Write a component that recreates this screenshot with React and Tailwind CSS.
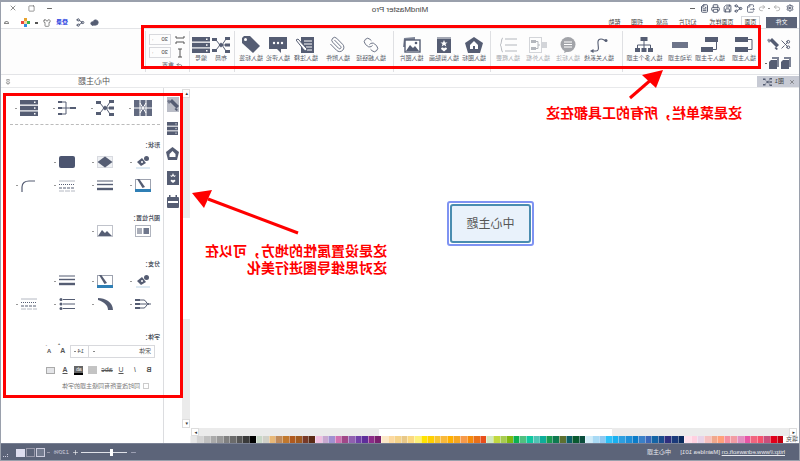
import { Scissors, Printer, Save, Share2, Undo2, Redo2, Link, Paperclip, Shirt, Cloud, Settings, FileOutput, FileText, Minus, Plus, X, Pin, Square, Minus as Dash } from 'lucide-react';

const D = '#555d73';
const G = '#b4b7bd';

const palette = [
  '#c00010', '#e0001b', '#c94f7c', '#f4516c', '#f1657f', '#e756a5', '#e18fc0', '#f29ca3', '#f48fa0', '#ffa07a', '#f0a88c', '#f6c0c0', '#e8d3e8', '#ffd0e0', '#ffe0ec',
  '#0a2a5e', '#1b3a7a', '#2e2e7e', '#1a4b8c', '#1464a5', '#3a66b8', '#3a80c8', '#0b7cc8', '#1f8fd8', '#2d9fe0', '#18b0f0', '#2cc0f8', '#90c8f0', '#a8daf5', '#d0ecf8',
  '#0a4d3c', '#0a5a30', '#0b5e66', '#5d7030', '#0e7a50', '#1a9a50', '#0eae9a', '#50c4b4', '#10c8a0', '#50c080', '#0cb050', '#80b810', '#a8cc50', '#c0d840', '#d0e8c0',
  '#e84e1b', '#e8701a', '#f58a0b', '#f79a4a', '#f5a623', '#ffb000', '#f9b93a', '#f7c52f', '#ffd000', '#ffe400', '#fdf07a', '#fbd880', '#e8c888', '#f5d38a', '#fcd9a0', '#fce8c8',
  '#7a1f6e', '#8c2a88', '#5e2e9a', '#7040a8', '#9060b0', '#a04888', '#d070b0', '#a090d0', '#c8a8d0', '#f0c0e0',
  '#5a2a15', '#783a28', '#a05a20', '#b05a1e', '#c0782e', '#c08a5a', '#e8b878', '#d0d0c8', '#c8d8c8',
  '#000000', '#3a3a3a', '#555555', '#6b6b6b', '#808080', '#999999', '#aaaaaa', '#c0c0c0', '#d4d4d4', '#e8e8e8',
];

// drawn the way the picture shows them, the page flip turns them back
function Ic({ w = 18, h = 16, children }) {
  return (
    <svg width={w} height={h} viewBox={`0 0 ${w} ${h}`} className="-scale-x-100 shrink-0">
      {children}
    </svg>
  );
}

const TopicIcon = () => (
  <Ic w={18} h={15}>
    <rect x="0" y="0" width="13" height="5" fill={D} />
    <rect x="0" y="10" width="13" height="5" fill={D} />
    <path d="M13 2.5H17V12.5H13" fill="none" stroke={D} />
  </Ic>
);
const SubIcon = () => (
  <Ic w={18} h={15}>
    <rect x="4" y="0" width="13" height="5" fill={D} />
    <rect x="0" y="10" width="12" height="5" fill={D} />
    <path d="M15.5 5V12.5H12" fill="none" stroke={D} />
  </Ic>
);
const FloatIcon = () => (
  <Ic w={18} h={15}>
    <rect x="1" y="5" width="16" height="6" fill="#6d7489" />
  </Ic>
);
const MultiIcon = () => (
  <Ic w={18} h={15}>
    <rect x="5.5" y="0" width="7" height="4" fill={D} />
    <path d="M9 4V8M2.5 8H15.5M2.5 8V11M9 8V11M15.5 8V11" fill="none" stroke={D} />
    <rect x="0" y="11" width="5" height="4" fill={D} />
    <rect x="6.5" y="11" width="5" height="4" fill={D} />
    <rect x="13" y="11" width="5" height="4" fill={D} />
  </Ic>
);
const RelationIcon = () => (
  <Ic w={18} h={16}>
    <path d="M2 14H6C12 14 4 2 11 2C13 2 14 3 15.5 3.5" fill="none" stroke={D} strokeWidth="1.1" />
    <path d="M0 14L3.5 12V16Z" fill={D} />
    <circle cx="16" cy="3.5" r="1.5" fill={D} />
  </Ic>
);
const CalloutIcon = () => (
  <Ic w={18} h={16}>
    <circle cx="9" cy="7.5" r="7.5" fill="#a2a4a9" />
    <path d="M6 13L5 16L10 14Z" fill="#a2a4a9" />
    <path d="M5 5H13M5 7.5H13M5 10H13" stroke="#fff" />
  </Ic>
);
const FrameIcon = () => (
  <Ic w={18} h={16}>
    <rect x="0.5" y="0.5" width="12" height="15" fill="none" stroke="#d3d5d9" />
    <rect x="2" y="3" width="5" height="3" fill={G} />
    <rect x="2" y="10" width="5" height="3" fill={G} />
    <path d="M7 4.5H9V11.5H7M9 8H11" fill="none" stroke={G} />
    <rect x="12" y="5" width="6" height="6" fill="#d3d5d9" />
  </Ic>
);
const SummaryIcon = () => (
  <Ic w={18} h={16}>
    <path d="M4 1C2 1 3 7 1 8C3 9 2 15 4 15" fill="none" stroke={G} />
    <path d="M6 2H18M6 8H18M6 14H18" stroke={G} strokeWidth="1.2" />
  </Ic>
);
const PentIcon = () => (
  <Ic w={18} h={16}>
    <path d="M9 0L18 6L15 16H3L0 6Z" fill={D} />
    <path d="M9 4L13 8V12H5V8Z" fill="#fff" />
    <path d="M8 9H10V12H8Z" fill={D} />
  </Ic>
);
const ClipartIcon = () => (
  <Ic w={16} h={16}>
    <rect x="1" y="0" width="14" height="16" fill={D} />
    <rect x="1" y="0" width="14" height="2" fill="#a4a8b4" />
    <path d="M8 3L9 5.5H11.5L9.5 7L10.3 9.5L8 8L5.7 9.5L6.5 7L4.5 5.5H7Z" fill="#fff" />
    <path d="M8 14.5L5 12C5 10 7.5 10 8 11.5C8.5 10 11 10 11 12Z" fill="#fff" />
  </Ic>
);
const PictureIcon = () => (
  <Ic w={20} h={16}>
    <path d="M3 1L14 0V3H4V10H2Z" fill="#7d8496" />
    <rect x="4" y="3" width="15" height="12" fill="#fff" stroke={D} strokeWidth="1.4" />
    <path d="M5 14L9 8L12 11L14 9L18 14Z" fill={D} />
    <circle cx="15" cy="6" r="1.3" fill={D} />
  </Ic>
);
const NoteIcon = () => (
  <Ic w={19} h={16}>
    <rect x="5" y="0" width="13" height="16" fill={D} />
    <path d="M8 4H16M8 7H16M10 10H16M11 13H16" stroke="#fff" />
    <path d="M0 3L2 2L11 12L10 14L8 13Z" fill="#fff" stroke={D} />
  </Ic>
);
const CommentIcon = () => (
  <Ic w={18} h={16}>
    <path d="M0 0H18V12H12V16L8 12H0Z" fill={D} />
    <circle cx="5" cy="6" r="1.2" fill="#fff" />
    <circle cx="9" cy="6" r="1.2" fill="#fff" />
    <circle cx="13" cy="6" r="1.2" fill="#fff" />
  </Ic>
);
const TagIcon = () => (
  <Ic w={20} h={17}>
    <path d="M1 2L3 0H9L19 10L12 17L1 7Z" fill={D} />
    <circle cx="4.5" cy="3.5" r="1.5" fill="#fff" />
  </Ic>
);
const MindIcon = ({ w = 18, h = 16 }) => (
  <Ic w={w} h={h}>
    <g transform={`scale(${w / 18} ${h / 16})`}>
      <path d="M4 3L8 8L4 13M14 2L10 8L14 14M10 8H14" fill="none" stroke={D} />
      <path d="M9 5.500L11.500 8L9 10.500L6.500 8Z" fill={D} />
      <rect x="0" y="1" width="5" height="3" fill={D} />
      <rect x="0" y="12" width="5" height="3" fill={D} />
      <rect x="13" y="0" width="5" height="3" fill={D} />
      <rect x="13" y="6.500" width="5" height="3" fill={D} />
      <rect x="13" y="13" width="5" height="3" fill={D} />
    </g>
  </Ic>
);
const StackIcon = ({ w = 18, h = 16 }) => (
  <Ic w={w} h={h}>
    <g transform={`scale(${w / 18} ${h / 16})`}>
      <rect x="0" y="0" width="18" height="4.5" fill={D} />
      <rect x="0" y="5.8" width="18" height="4.5" fill={D} />
      <rect x="0" y="11.5" width="18" height="4.5" fill={D} />
      <rect x="14" y="1.5" width="1.5" height="1.5" fill="#fff" />
      <rect x="14" y="7.3" width="1.5" height="1.5" fill="#fff" />
      <rect x="14" y="13" width="1.5" height="1.5" fill="#fff" />
    </g>
  </Ic>
);
const BrushIcon = () => (
  <Ic w={12} h={12}>
    <path d="M5 0L12 7L9.5 9.5L2.5 2.5Z" fill={D} />
    <path d="M9 9L11 11L9.5 12L7.5 10Z" fill={D} />
    <path d="M0 2L2 0.5L4 3L2 5Z" fill={D} opacity="0.7" />
  </Ic>
);
const PasteIcon = () => (
  <Ic w={10} h={12}>
    <path d="M3 0H10V10H8V2H3Z" fill="#7d8496" />
    <path d="M2 3H8V12H0V5Z" fill={D} />
  </Ic>
);
const FishIcon = () => (
  <Ic w={18} h={16}>
    <rect x="0" y="0" width="18" height="16" fill="#626a80" />
    <path d="M0 8H18M6 0V16M12 0V16" stroke="#fff" />
    <path d="M6 3L9 8L12 3M6 13L9 8L12 13" fill="none" stroke="#fff" />
  </Ic>
);
const TreeIcon = () => (
  <Ic w={18} h={16}>
    <rect x="12" y="7" width="6" height="2" fill={D} />
    <path d="M4 2H8V14H4M4 8H12" fill="none" stroke={D} />
    <rect x="0" y="1" width="4" height="2" fill={D} />
    <rect x="0" y="7" width="4" height="2" fill={D} />
    <rect x="0" y="13" width="4" height="2" fill={D} />
  </Ic>
);
const FillIcon = () => (
  <Ic w={16} h={14}>
    <rect x="1" y="12" width="14" height="2" fill="#dde9f2" />
    <path d="M2 7L7 3L11 8L6 11Z" fill={D} />
    <circle cx="11.5" cy="3.5" r="2.5" fill={D} />
    <circle cx="7" cy="7" r="1" fill="#fff" />
  </Ic>
);
const DiamondIcon = () => (
  <Ic w={16} h={12}>
    <rect x="0.5" y="0.5" width="15" height="11" fill="#eef0f3" stroke="#d8dae0" />
    <path d="M0.5 6L8 0.5L15.5 6L8 11.5Z" fill={D} />
  </Ic>
);
const RoundRectIcon = () => (
  <Ic w={16} h={12}>
    <rect x="0" y="0" width="16" height="12" rx="2" fill="#4c5570" />
  </Ic>
);
const BorderColorIcon = () => (
  <Ic w={16} h={13}>
    <rect x="0.5" y="0.5" width="15" height="12" fill="#fff" stroke="#9ea3b0" />
    <rect x="0" y="10" width="16" height="3" fill="#2f7fb5" />
    <path d="M2 0L4 -0.5L10 8L7.5 9Z" fill={D} />
  </Ic>
);
const LinesIcon = () => (
  <Ic w={16} h={12}>
    <path d="M0 1H16" stroke={D} strokeWidth="1" />
    <path d="M0 4.5H16" stroke={D} strokeWidth="1.4" />
    <path d="M0 9H16" stroke={D} strokeWidth="2.4" />
  </Ic>
);
const DashIcon = () => (
  <Ic w={16} h={12}>
    <path d="M0 1H16" stroke="#b4b8c2" />
    <path d="M0 4.5H16" stroke={D} strokeDasharray="1 1" />
    <path d="M0 8H16" stroke={D} strokeDasharray="3 1" />
    <path d="M0 11H16" stroke="#b4b8c2" strokeDasharray="5 1" />
  </Ic>
);
const CornerIcon = () => (
  <Ic w={16} h={12}>
    <path d="M1 12V7C1 3 4 1 8 1H14" fill="none" stroke={D} strokeWidth="1.2" />
  </Ic>
);
const PicLeftIcon = () => (
  <Ic w={16} h={12}>
    <rect x="0.5" y="0.5" width="15" height="11" fill="#fff" stroke="#b0b4be" />
    <path d="M2 4H7M2 6H7M2 8H7" stroke={D} />
    <rect x="8.5" y="3" width="5.5" height="6" fill="#6f778c" />
  </Ic>
);
const PicBottomIcon = () => (
  <Ic w={16} h={12}>
    <rect x="0.5" y="0.5" width="15" height="11" fill="#fff" stroke="#c0c3cb" />
    <path d="M1 11L5 5L8 8L10 6L15 11Z" fill={D} />
  </Ic>
);
const CurveIcon = () => (
  <Ic w={16} h={12}>
    <path d="M1 0C8 0 16 4 16 12H11C11 7 7 4 1 2Z" fill={D} />
  </Ic>
);
const BranchIcon = () => (
  <Ic w={16} h={12}>
    <path d="M5 2H9C11 2 11 6 14 6H16M5 6H14M5 10H9C11 10 11 6 14 6" fill="none" stroke={D} />
    <rect x="0" y="1" width="5" height="2" fill={D} />
    <rect x="0" y="5" width="5" height="2" fill={D} />
    <rect x="0" y="9" width="5" height="2" fill={D} />
  </Ic>
);
const BulletsIcon = () => (
  <Ic w={16} h={12}>
    <path d="M4 1.5H16M4 6H16M4 10.5H16" stroke={D} />
    <circle cx="2" cy="1.5" r="1.5" fill={D} />
    <circle cx="2" cy="6" r="1.5" fill={D} />
    <circle cx="2" cy="10.5" r="1.5" fill={D} />
  </Ic>
);
const AppLogo = () => (
  <Ic w={9} h={9}>
    <rect x="3" y="0" width="3" height="3" fill="#e8a32e" />
    <rect x="0" y="3" width="3" height="3" fill="#e8463c" />
    <rect x="6" y="3" width="3" height="3" fill="#3bb54a" />
    <rect x="3" y="6" width="3" height="3" fill="#2f8ee0" />
    <rect x="3" y="3" width="3" height="3" fill="#f3d9a0" />
  </Ic>
);

function Btn({ w, label, gray, children }) {
  return (
    <div className={`flex flex-col items-center pt-[7px] shrink-0 ${w}`}>
      <div className="h-[17px] flex items-center justify-center">{children}</div>
      <div className={`mt-px h-[8px] leading-[8px] text-[6px] whitespace-nowrap ${gray ? 'text-[#a9acb2]' : 'text-[#555a66]'}`}>{label}</div>
    </div>
  );
}

const Sep = () => <div className="w-px my-[2px] bg-[#dfe0e3] shrink-0" />;

function Cell({ children, arrow = true }) {
  return (
    <div className="grid grid-cols-[1fr_auto_1fr] items-center">
      <div className="col-start-2">{children}</div>
      {arrow && <div className="col-start-3 pl-[3px]"><div className="w-[2px] h-px bg-[#999]" /></div>}
    </div>
  );
}

const Label = ({ className, children }) => (
  <div className={`pl-[2px] h-[8px] leading-[8px] text-[6px] font-bold text-[#555a66] ${className}`}>{children}</div>
);

function FormatBtn({ className, children }) {
  return <div className={`w-[14px] flex justify-center text-[7px] leading-[10px] text-[#555] font-bold ${className || ''}`}>{children}</div>;
}

function QuickIcon({ children }) {
  return <div className="w-[11.500px] flex justify-center shrink-0">{children}</div>;
}

export default function App() {
  return (
    <div className="relative w-[800px] h-[461px] overflow-hidden bg-white -scale-x-100 font-['Liberation_Sans','Noto_Sans_CJK_SC',sans-serif]">
      {/* title row */}
      <div className="h-[13px] flex items-center pl-[4px] pt-[3px] relative">
        <div className="w-[12px] flex justify-center shrink-0">
          <Settings size={8} strokeWidth={3} className="text-[#4f576d]" />
        </div>
        <div className="flex items-center text-[#4f576d] ml-[1px]">
          <QuickIcon><Redo2 size={8} strokeWidth={2} className="text-[#999]" /></QuickIcon>
          <div className="w-[4px] flex justify-center"><div className="w-[2px] h-px bg-[#888]" /></div>
          <QuickIcon><Undo2 size={8} strokeWidth={2} className="text-[#999]" /></QuickIcon>
          <QuickIcon><FileOutput size={9} strokeWidth={2} /></QuickIcon>
          <QuickIcon><Share2 size={9} strokeWidth={2.500} /></QuickIcon>
          <QuickIcon><Save size={9} strokeWidth={2.500} /></QuickIcon>
          <QuickIcon><Printer size={9} strokeWidth={2.500} /></QuickIcon>
          <QuickIcon><FileText size={9} strokeWidth={2.500} /></QuickIcon>
          <QuickIcon><div className="w-[5px] h-px bg-[#666]" /></QuickIcon>
        </div>
        <div className="absolute left-[365px] top-[3px] w-[70px] text-center text-[8px] leading-[13px] text-[#444] whitespace-nowrap">MindMaster Pro</div>
        <div className="ml-auto flex items-center gap-[11px] pr-[9px] text-[#555]">
          <Dash size={7} strokeWidth={3} />
          <Square size={7} strokeWidth={2} />
          <X size={8} strokeWidth={2} />
        </div>
      </div>

      {/* tab row */}
      <div className="h-[15px] flex items-end text-[6px] text-[#444]">
        <div className="ml-[3px] w-[31px] h-[11px] bg-[#5c6479] text-white flex items-center justify-center">文件</div>
        <div className="ml-[6px] w-[19px] h-[12px] border border-b-0 border-[#d5d7dc] flex items-center justify-center">页面</div>
        <div className="w-[39px] h-[11px] flex items-center justify-center">页面样式</div>
        <div className="w-[29px] h-[11px] flex items-center justify-center">幻灯片</div>
        <div className="w-[22px] h-[11px] flex items-center justify-center">高级</div>
        <div className="w-[28px] h-[11px] flex items-center justify-center">视图</div>
        <div className="w-[17px] h-[11px] flex items-center justify-center">帮助</div>
        <div className="ml-auto h-[11px] flex items-center gap-[5px] pr-[4px]">
          <Cloud size={9} fill={D} stroke={D} />
          <Share2 size={9} strokeWidth={2.500} className="text-[#4f576d] mr-[3px]" />
          <div className="text-[#2a3fe0] font-bold w-[12px] whitespace-nowrap">登录</div>
          <Shirt size={8} className="text-[#555]" />
          <div className="w-[3px] h-[2px] bg-[#555]" />
          <AppLogo />
          <div className="w-[5px] h-[3px] ml-[7px] border border-[#888] rounded-t-full" />
        </div>
      </div>

      {/* ribbon */}
      <div className="h-[47px] flex border-y border-[#e3e4e7] bg-[#fdfdfd]">
        <div className="w-[38px] shrink-0 pl-[9px] pt-[9px] flex flex-col gap-[7px]">
          <div className="flex gap-[1px] items-center">
            <Scissors size={11} className="text-[#4f576d]" strokeWidth={2} />
            <BrushIcon />
          </div>
          <div className="flex gap-[2px] items-center">
            <PasteIcon />
            <PasteIcon />
            <div className="w-[2px] h-px bg-[#666]" />
          </div>
        </div>
        <Btn w="w-[36px]" label="插入主题"><TopicIcon /></Btn>
        <Btn w="w-[32px]" label="插入子主题"><SubIcon /></Btn>
        <Btn w="w-[28px]" label="浮动主题"><FloatIcon /></Btn>
        <Btn w="w-[43px]" label="插入多个主题"><MultiIcon /></Btn>
        <Sep />
        <div className="w-[7px] shrink-0" />
        <Btn w="w-[32px]" label="插入关系线"><RelationIcon /></Btn>
        <Btn w="w-[30px]" label="插入标注" gray><CalloutIcon /></Btn>
        <Btn w="w-[30px]" label="插入外框" gray><FrameIcon /></Btn>
        <Btn w="w-[30px]" label="插入概要" gray><SummaryIcon /></Btn>
        <div className="w-[2px] shrink-0" />
        <Sep />
        <div className="w-px shrink-0" />
        <Btn w="w-[30px]" label="插入图标"><PentIcon /></Btn>
        <Btn w="w-[30px]" label="插入剪贴画"><ClipartIcon /></Btn>
        <Btn w="w-[35px]" label="插入图片"><PictureIcon /></Btn>
        <Sep />
        <div className="w-[4px] shrink-0" />
        <Btn w="w-[36px]" label="插入超链接"><Link size={16} strokeWidth={1.300} className="text-[#555d73]" /></Btn>
        <Btn w="w-[30px]" label="插入附件"><Paperclip size={17} strokeWidth={1.200} className="text-[#555d73]" /></Btn>
        <Btn w="w-[34px]" label="插入注释"><NoteIcon /></Btn>
        <Btn w="w-[22px]" label="插入评论"><CommentIcon /></Btn>
        <Btn w="w-[32px]" label="插入标签"><TagIcon /></Btn>
        <Sep />
        <div className="w-px shrink-0" />
        <Btn w="w-[24px]" label="布局"><MindIcon /></Btn>
        <Btn w="w-[16px]" label="编号"><StackIcon /></Btn>
        <div className="w-[3px] shrink-0" />
        <Sep />
        <div className="w-[43px] shrink-0 pl-[4px] pt-[5px] flex flex-col">
          <div className="flex items-center gap-[2px]">
            <svg width="10" height="10" viewBox="0 0 10 10" className="shrink-0"><path d="M1 1V3H9V1M1 9V7H9V9" fill="none" stroke="#555" /></svg>
            <div className="w-[22px] h-[11px] border border-[#d8d9dd] flex items-center justify-between px-[2px] text-[6px] text-[#444] ml-[2px]">
              <span>30</span><span className="leading-[4px] text-[4px]">:</span>
            </div>
          </div>
          <div className="flex items-center gap-[2px] mt-[2px]">
            <svg width="10" height="10" viewBox="0 0 10 10" className="shrink-0"><path d="M3 1H7M3 9H7M5 1V9" fill="none" stroke="#555" /></svg>
            <div className="w-[22px] h-[11px] border border-[#d8d9dd] flex items-center justify-between px-[2px] text-[6px] text-[#444] ml-[2px]">
              <span>30</span><span className="leading-[4px] text-[4px]">:</span>
            </div>
          </div>
          <div className="flex items-center gap-[2px] mt-[3px] text-[6px] leading-[8px] text-[#555a66]">
            <Undo2 size={7} className="text-[#555] ml-[2px] -scale-x-100" />
            <span>重置</span>
          </div>
        </div>
        <Sep />
      </div>

      {/* document row */}
      <div className="h-[13px] flex items-center border-b border-[#e8e9eb] relative">
        <div className="w-[43px] h-[11px] mt-[1px] bg-[#c7cad4] flex items-center pl-[5px] gap-[3px] text-[6px] text-[#444]">
          <X size={6} strokeWidth={2} className="text-[#444]" />
          <span className="ml-[2px]">图1</span>
          <MindIcon w={9} h={8} />
        </div>
        <div className="absolute left-[617px] w-[183px] text-center text-[8px] text-[#555] leading-[13px] pr-[5px]">中心主题</div>
        <Pin size={6} className="absolute left-[789px] top-[4px] text-[#555]" />
      </div>

      {/* main area */}
      <div className="h-[355px] flex">
        <div className="w-[610px] flex flex-col shrink-0">
          <div className="relative h-[340px]">
            <div className="absolute left-[266px] top-[113px] w-[87px] h-[45px] rounded-[3px] border-2 border-[#7f93f2] p-px">
              <div className="w-full h-full rounded-[3px] border-2 border-[#4a8db0] bg-[#e9f2fb] flex items-center justify-center text-[12px] text-[#555]">中心主题</div>
            </div>
          </div>
          <div className="h-[8px] flex pl-[3px]">
            <div className="w-[8px] border border-[#ddd] bg-white flex items-center justify-center text-[5px] text-[#333] leading-none">◂</div>
            <div className="w-[177px] bg-[#ebebeb]" />
            <div className="w-[233px] bg-white border-t border-[#e4e4e4]" />
            <div className="w-[180px] bg-[#ebebeb]" />
            <div className="w-[8px] border border-[#ddd] bg-white flex items-center justify-center text-[5px] text-[#333] leading-none">▸</div>
          </div>
          <div className="h-[7px] flex items-center">
            <div className="w-[17px] pl-[2px] text-[6px] leading-[7px] text-[#555] whitespace-nowrap">填充</div>
            {palette.map((c) => (
              <div key={c} className="w-[6.670px] h-[7px] border-r border-white/40" style={{ backgroundColor: c }} />
            ))}
          </div>
        </div>

        {/* vertical scrollbar */}
        <div className="w-[8px] flex flex-col shrink-0 pt-px">
          <div className="h-[9px] border border-[#ddd] flex items-center justify-center text-[5px] leading-none text-[#333]">▴</div>
          <div className="h-[120px] bg-[#ebebeb]" />
          <div className="h-[101px] bg-white" />
          <div className="h-[100px] bg-[#ebebeb]" />
          <div className="h-[9px] border border-[#ddd] flex items-center justify-center text-[5px] leading-none text-[#333]">▾</div>
        </div>

        {/* side tabs */}
        <div className="w-[19px] shrink-0 flex flex-col items-center pt-[9px] border-r border-[#dcdde0]">
          <div className="w-[12px] h-[15px] bg-[#b9bcc6] flex items-center justify-center"><BrushIcon /></div>
          <div className="mt-[10px]"><StackIcon w={11} h={13} /></div>
          <div className="mt-[12px]"><Ic w={13} h={13}><path d="M6.500 0L13 5L11 13H2L0 5Z" fill={D} /><path d="M6.500 4L9.500 7V10H3.500V7Z" fill="#fff" /></Ic></div>
          <div className="mt-[11px]"><Ic w={12} h={14}><rect width="12" height="14" fill={D} /><path d="M6 2L7 4.500H9L7.500 6L6 5L4.500 6L3 4.500H5Z" fill="#fff" /><path d="M6 12L3.500 10C4 8.500 5.500 8.500 6 9.500C6.500 8.500 8 8.500 8.500 10Z" fill="#fff" /></Ic></div>
          <div className="mt-[10px]"><Ic w={12} h={13}><rect y="2" width="12" height="11" rx="1" fill={D} /><rect x="2" y="0" width="1.500" height="3" fill={D} /><rect x="8.500" y="0" width="1.500" height="3" fill={D} /><rect x="1" y="6" width="10" height="2" fill="#fff" /></Ic></div>
        </div>

        {/* properties panel */}
        <div className="flex-1 pl-px pt-[12px]">
          <div className="grid grid-cols-[repeat(4,38px)]">
            <Cell><FishIcon /></Cell>
            <Cell><MindIcon /></Cell>
            <Cell><TreeIcon /></Cell>
            <Cell><StackIcon /></Cell>
          </div>
          <div className="mt-[8px] ml-[2px] w-[150px] border-t border-dashed border-[#bbb]" />
          <Label className="mt-[16px]">形状：</Label>
          <div className="mt-[6px] grid grid-cols-[repeat(4,38px)] h-[12px]">
            <Cell><FillIcon /></Cell>
            <Cell><DiamondIcon /></Cell>
            <Cell><RoundRectIcon /></Cell>
          </div>
          <div className="mt-[12px] grid grid-cols-[repeat(4,38px)] h-[12px]">
            <Cell><BorderColorIcon /></Cell>
            <Cell><LinesIcon /></Cell>
            <Cell><DashIcon /></Cell>
            <Cell><CornerIcon /></Cell>
          </div>
          <Label className="mt-[23px]">图片位置：</Label>
          <div className="mt-[3px] grid grid-cols-[repeat(4,38px)] h-[12px]">
            <Cell arrow={false}><PicLeftIcon /></Cell>
            <Cell><PicBottomIcon /></Cell>
          </div>
          <Label className="mt-[23px]">分支：</Label>
          <div className="mt-[6px] grid grid-cols-[repeat(4,38px)] h-[12px]">
            <Cell><FillIcon /></Cell>
            <Cell><BorderColorIcon /></Cell>
            <Cell><LinesIcon /></Cell>
          </div>
          <div className="mt-[12px] grid grid-cols-[repeat(4,38px)] h-[12px]">
            <Cell><BranchIcon /></Cell>
            <Cell><CurveIcon /></Cell>
            <Cell><BulletsIcon /></Cell>
            <Cell><DashIcon /></Cell>
          </div>
          <Label className="mt-[23px]">字体：</Label>
          <div className="mt-[4px] ml-[7px] flex items-center h-[13px]">
            <div className="w-[67px] h-[13px] border border-[#d8d9dd] flex items-center justify-between pl-[3px] pr-[4px] text-[6px] text-[#555]">
              <span>宋体</span>
              <div className="w-[2px] h-px bg-[#888]" />
            </div>
            <div className="w-[18px] h-[13px] border border-l-0 border-[#d8d9dd] flex items-center justify-between pl-[4px] pr-[3px] text-[6px] text-[#555]">
              <span>14</span>
              <div className="w-[2px] h-px bg-[#888]" />
            </div>
            <div className="ml-[2px] w-[13px] flex justify-center text-[7px] font-bold text-[#555]">A<sup className="text-[4px]">+</sup></div>
            <div className="w-[13px] flex justify-center text-[6px] font-bold text-[#555]">A<sup className="text-[4px]">-</sup></div>
          </div>
          <div className="mt-[6px] ml-[6px] flex items-center h-[12px]">
            <FormatBtn>B</FormatBtn>
            <FormatBtn className="italic font-normal">I</FormatBtn>
            <FormatBtn className="underline font-normal">U</FormatBtn>
            <FormatBtn className="line-through font-normal text-[6px]">abc</FormatBtn>
            <FormatBtn><Ic w={9} h={8}><path d="M0 1H9M0 3H9M0 5H9M0 7H9" stroke="#888" /></Ic></FormatBtn>
            <FormatBtn><div className="w-[9px] h-[9px] bg-[#666] border-b-2 border-black text-white text-[5px] leading-[7px] text-center font-normal">ab</div></FormatBtn>
            <FormatBtn className="underline">A</FormatBtn>
            <FormatBtn><div className="w-[9px] h-[7px] border border-[#aaa] bg-[#e4e5e8]" /></FormatBtn>
          </div>
          <div className="mt-[6px] ml-[13px] flex items-center gap-[3px] h-[8px]">
            <div className="w-[6px] h-[6px] border border-[#ccc]" />
            <span className="text-[6px] leading-[8px] text-[#777] whitespace-nowrap">同时改变所有同级主题的字体</span>
          </div>
        </div>
      </div>

      {/* status bar */}
      <div className="h-[18px] bg-[#5c6479] flex items-center text-[6px] text-[#e8e9ee] border-t border-[#7a8194]">
        <span className="ml-[15px] underline whitespace-nowrap w-[65px]">http://www.edrawsoft.cn</span>
        <span className="whitespace-nowrap w-[49px]">[MainIdea 101]</span>
        <span className="whitespace-nowrap">中心主题</span>
        <div className="ml-auto flex items-center text-white">
          <Minus size={7} strokeWidth={2} className="text-[#ccd]" />
          <div className="ml-[3px] w-[46px] h-px bg-[#dfe1e8] relative">
            <div className="absolute left-[14px] -top-[3px] w-[3px] h-[7px] bg-white" />
          </div>
          <Plus size={7} strokeWidth={2} className="ml-[2px]" />
          <span className="ml-[3px] w-[19px] italic text-[#ccd]">130%</span>
          <div className="w-[3px] h-px bg-[#99a]" />
          <div className="ml-[2px] w-[9px] h-[9px] border border-[#ccd] bg-[#747c90]" />
          <div className="ml-px w-[9px] h-[9px] border border-[#99a]" />
          <div className="ml-[1px] w-[9px] h-[8px] bg-[#dde]" />
          <div className="ml-[8px] mr-[3px] mt-[6px] w-[5px] h-[3px] border-b border-l border-dotted border-[#ccd]" />
        </div>
      </div>

      {/* window frame */}
      <div className="absolute inset-0 border border-t-2 border-[#9aa0ac] pointer-events-none" />

      {/* red annotations */}
      <div className="absolute left-[39px] top-[25px] w-[620px] h-[44px] border-[3px] border-[#f00]" />
      <div className="absolute left-[617px] top-[93px] w-[180px] h-[305px] border-[3px] border-[#f00]" />
      <svg width="800" height="461" className="absolute left-0 top-0 pointer-events-none">
        <path d="M170 98L147 78" stroke="#f00" strokeWidth="3" />
        <path d="M137 70L158 75L144 88Z" fill="#f00" />
        <path d="M502 233L592 199" stroke="#f00" strokeWidth="3" />
        <path d="M608 193L596 208L588 190Z" fill="#f00" />
      </svg>
      <div className="absolute left-[58px] top-[104px] text-[14px] leading-[18px] font-bold text-[#f00] whitespace-nowrap">这是菜单栏，所有的工具都在这</div>
      <div className="absolute left-[413px] top-[243px] text-[14px] leading-[17px] font-bold text-[#f00] whitespace-nowrap">
        <div>这是设置属性的地方，可以在</div>
        <div>这对思维导图进行美化</div>
      </div>
    </div>
  );
}
